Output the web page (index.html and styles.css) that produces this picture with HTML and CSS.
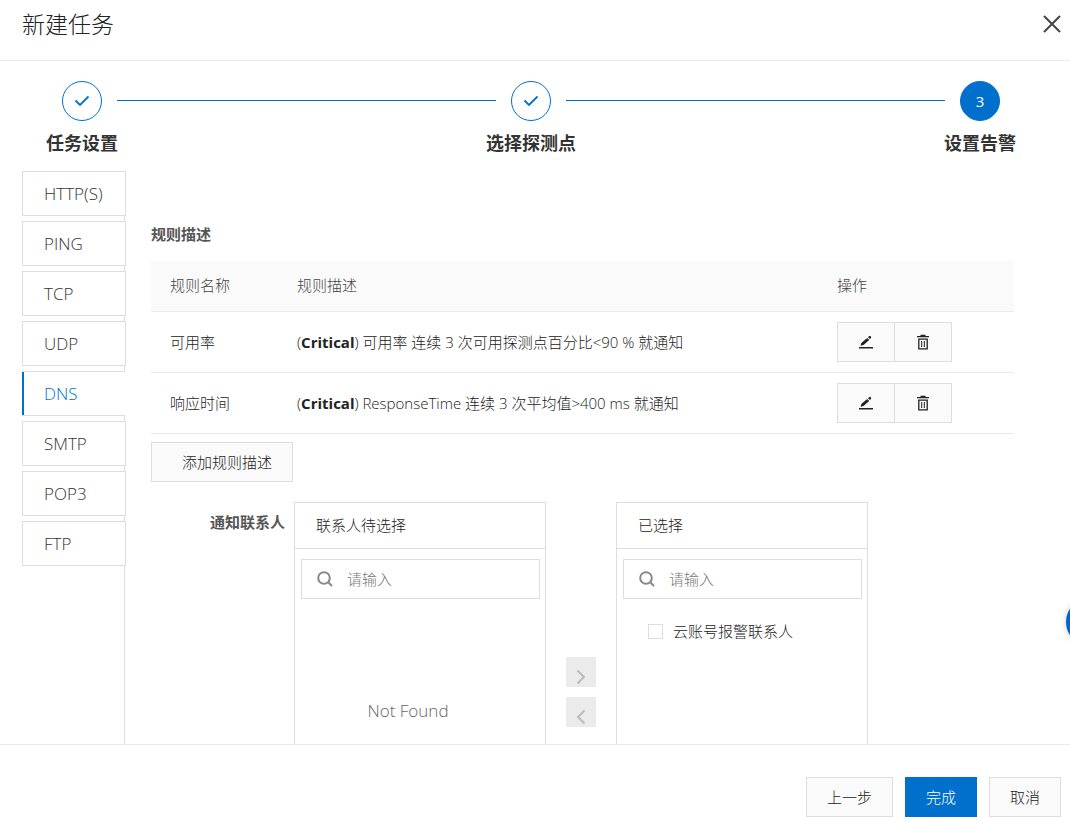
FILE: index.html
```html
<!DOCTYPE html>
<html lang="zh-CN">
<head>
<meta charset="utf-8">
<title>新建任务</title>
<meta name="viewport" content="width=device-width, initial-scale=1">
<link rel="stylesheet" href="styles.css">
</head>
<body>
<svg class="sprite" aria-hidden="true">
  <symbol id="check" viewBox="0 0 16 12"><path d="M1.5 5.5 6 10 14.500 1.500" fill="none" stroke="currentColor" stroke-width="1.800"/></symbol>
  <symbol id="search" viewBox="0 0 16 16"><circle cx="7" cy="7" r="5.800" fill="none" stroke="currentColor" stroke-width="2"/><path d="m11 11 4 4" stroke="currentColor" stroke-width="2"/></symbol>
  <symbol id="edit" viewBox="0 0 14 14"><path d="M0 12h14v1.5H0zM1.5 10.8l.8-2.9 5.9-5 2 2-5.7 5.1zM9 2.2l1.2-1.1q1-.5 1.6.2.7.8.1 1.6L10.9 4z" fill="currentColor"/></symbol>
  <symbol id="trash" viewBox="0 0 14 16"><path d="M1 2.7h12M4.5 1.5h5M2.8 5.2h8.4v9.6H2.8z" fill="none" stroke="currentColor" stroke-width="1.3"/><path d="M5.7 7v6M8.3 7v6" stroke="currentColor"/></symbol>
</svg>
<div class="dialog">
  <header class="dialog-header">
    <h1>新建任务</h1>
    <button class="close" type="button" aria-label="关闭"><svg viewBox="0 0 18 18"><path d="m1 1 16 16M17 1 1 17" fill="none" stroke="currentColor" stroke-width="2"/></svg></button>
  </header>
  <main class="dialog-body">
    <ol class="steps">
      <li class="step"><span class="step-node"><svg><use href="#check"/></svg></span><span class="step-label">任务设置</span></li>
      <li class="step-line" aria-hidden="true"></li>
      <li class="step"><span class="step-node"><svg><use href="#check"/></svg></span><span class="step-label">选择探测点</span></li>
      <li class="step-line" aria-hidden="true"></li>
      <li class="step"><span class="step-node current">3</span><span class="step-label">设置告警</span></li>
    </ol>
    <div class="columns">
      <nav class="tabs">
        <button class="tab" type="button">HTTP(S)</button>
        <button class="tab" type="button">PING</button>
        <button class="tab" type="button">TCP</button>
        <button class="tab" type="button">UDP</button>
        <button class="tab active" type="button">DNS</button>
        <button class="tab" type="button">SMTP</button>
        <button class="tab" type="button">POP3</button>
        <button class="tab" type="button">FTP</button>
      </nav>
      <section class="content">
        <h2>规则描述</h2>
        <table class="rules">
          <thead><tr><th class="col-name">规则名称</th><th>规则描述</th><th class="col-actions">操作</th></tr></thead>
          <tbody>
            <tr>
              <td>可用率</td>
              <td>(<b>Critical</b>) 可用率 连续 3 次可用探测点百分比&lt;90 % 就通知</td>
              <td><div class="actions"><button type="button" aria-label="编辑"><svg class="icon-edit"><use href="#edit"/></svg></button><button type="button" aria-label="删除"><svg class="icon-trash"><use href="#trash"/></svg></button></div></td>
            </tr>
            <tr>
              <td>响应时间</td>
              <td>(<b>Critical</b>) ResponseTime 连续 3 次平均值&gt;400 ms 就通知</td>
              <td><div class="actions"><button type="button" aria-label="编辑"><svg class="icon-edit"><use href="#edit"/></svg></button><button type="button" aria-label="删除"><svg class="icon-trash"><use href="#trash"/></svg></button></div></td>
            </tr>
          </tbody>
        </table>
        <button class="btn add-rule" type="button">添加规则描述</button>
        <div class="contacts">
          <span class="field-label">通知联系人</span>
          <div class="panel">
            <div class="panel-title">联系人待选择</div>
            <label class="search"><svg><use href="#search"/></svg><input type="text" placeholder="请输入" aria-label="搜索待选择联系人"></label>
            <p class="empty">Not Found</p>
          </div>
          <div class="movers">
            <button type="button" aria-label="添加" disabled><svg viewBox="0 0 10 16"><path d="m1.5 1.5 6.500 6.500-6.500 6.500" fill="none" stroke="currentColor" stroke-width="2"/></svg></button>
            <button type="button" aria-label="移除" disabled><svg viewBox="0 0 10 16"><path d="M8.500 1.500 2 8l6.500 6.500" fill="none" stroke="currentColor" stroke-width="2"/></svg></button>
          </div>
          <div class="panel">
            <div class="panel-title">已选择</div>
            <label class="search"><svg><use href="#search"/></svg><input type="text" placeholder="请输入" aria-label="搜索已选择联系人"></label>
            <label class="option"><input type="checkbox">云账号报警联系人</label>
          </div>
        </div>
      </section>
    </div>
  </main>
  <footer class="dialog-footer">
    <button class="btn" type="button">上一步</button>
    <button class="btn primary" type="button">完成</button>
    <button class="btn" type="button">取消</button>
  </footer>
</div>
<button class="float-help" type="button" aria-label="帮助"></button>
</body>
</html>
```
FILE: styles.css
```css
* { box-sizing: border-box; }

body {
  margin: 0;
  overflow: hidden;
  background: #fff;
  color: #222;
  font: 15px/20px "Open Sans", "Noto Sans CJK SC", sans-serif;
  font-weight: 300;
}

h1, h2, p, ol { margin: 0; padding: 0; }
ol { list-style: none; }
button, input { font: inherit; color: inherit; margin: 0; }
button { padding: 0; cursor: pointer; }
.sprite { display: none; }

.dialog { display: flex; flex-direction: column; height: 100vh; }

.dialog-header {
  flex: none;
  display: flex;
  justify-content: space-between;
  align-items: flex-start;
  height: 61px;
  padding: 8px 9px 0 22px;
  border-bottom: 1px solid #ebebeb;
}
.dialog-header h1 { font-size: 23px; line-height: 32px; font-weight: 300; }
.close { display: flex; margin-top: 7px; border: 0; background: none; color: #444; }
.close svg { width: 18px; height: 18px; }

.dialog-body { flex: 1; min-height: 0; overflow: hidden; display: flex; flex-direction: column; }

.steps { flex: none; display: flex; padding: 20px 55px 0 47px; }
.step { width: 70px; display: flex; flex-direction: column; align-items: center; }
.step-node {
  display: flex;
  align-items: center;
  justify-content: center;
  width: 40px;
  height: 40px;
  border: 1px solid #0070cc;
  border-radius: 50%;
  color: #0070cc;
}
.step-node svg { width: 16px; height: 12px; }
.step-node.current { background: #0070cc; color: #fff; font-weight: 400; }
.step-label { margin-top: 10px; font-size: 18px; line-height: 24px; font-weight: 700; color: #333; white-space: nowrap; }
.step-line { flex: 1; height: 1px; margin-top: 19px; background: #0070cc; }

.columns { flex: 1; display: flex; min-height: 0; margin-top: 16px; padding: 0 56px 0 22px; }

.tabs {
  flex: none;
  display: flex;
  flex-direction: column;
  gap: 5px;
  width: 103px;
  border-right: 1px solid #dedede;
}
.tab {
  width: 104px;
  height: 45px;
  padding: 0 0 0 21px;
  border: 1px solid #dedede;
  background: #fff;
  color: #333;
  font-size: 17px;
  text-align: left;
}
.tab.active { width: 103px; border-width: 1px 0; box-shadow: inset 2px 0 #0070cc; color: #0070cc; padding-left: 22px; }

.content { flex: 1; min-width: 0; margin-left: 26px; padding-top: 53px; }
.content h2 { font-size: 15px; line-height: 20px; font-weight: 700; color: #555; }

.rules { width: 100%; margin-top: 17px; border-collapse: separate; border-spacing: 0; table-layout: fixed; }
.rules th, .rules td { padding: 10px 19px; border-bottom: 1px solid #ebebeb; text-align: left; font-weight: 300; }
.rules th { height: 51px; padding-bottom: 12px; background: #fafafa; color: #444; }
.rules b { font-weight: 700; }
.col-name { width: 127px; }
.col-actions { width: 196px; }
.actions { display: flex; }
.actions button {
  display: flex;
  align-items: center;
  justify-content: center;
  width: 58px;
  height: 40px;
  border: 1px solid #dedede;
  background: #fafafa;
}
.actions button + button { margin-left: -1px; }
.icon-edit { width: 14px; height: 14px; }
.icon-trash { width: 14px; height: 16px; }

.btn { height: 40px; padding: 0 20px; border: 1px solid #dedede; background: #fafafa; white-space: nowrap; }
.btn.primary { border-color: #0070cc; background: #0070cc; color: #fff; }
.add-rule { display: block; margin-top: 8px; padding-left: 30px; }

.contacts { display: flex; margin-top: 20px; }
.field-label { width: 143px; padding: 10px 9px 0 0; text-align: right; font-weight: 700; color: #555; }
.panel { width: 252px; height: 330px; border: 1px solid #dedede; }
.panel-title { height: 46px; padding: 0 21px; border-bottom: 1px solid #dedede; line-height: 45px; }
.search {
  display: flex;
  align-items: center;
  gap: 14px;
  height: 40px;
  margin: 10px 5px 0 6px;
  padding: 0 15px;
  border: 1px solid #dedede;
  color: #888;
}
.search svg { flex: none; width: 16px; height: 16px; }
.search input { flex: 1; min-width: 0; padding: 0; border: 0; outline: 0; background: none; }
.search input::placeholder { color: #777; opacity: 1; }
.empty { margin-top: 100px; padding-right: 24px; text-align: center; font-size: 17px; line-height: 24px; color: #666; }
.option { display: flex; align-items: center; gap: 10px; margin: 22px 0 0 31px; }
.option input { appearance: none; width: 15px; height: 15px; border: 1px solid #dedede; background: #fff; }

.movers { display: flex; flex-direction: column; gap: 10px; margin: 155px 20px 0; }
.movers button { display: flex; justify-content: center; align-items: center; width: 30px; height: 30px; padding-top: 10px; border: 0; background: #ebebeb; color: #bbb; }
.movers svg { width: 10px; height: 16px; }

.dialog-footer {
  flex: none;
  display: flex;
  justify-content: flex-end;
  gap: 12px;
  padding: 32px 9px 5px;
  border-top: 1px solid #ebebeb;
}

.float-help {
  position: fixed;
  right: -44px;
  top: 598px;
  width: 48px;
  height: 48px;
  border: 0;
  border-radius: 50%;
  background: #0064c8;
  box-shadow: 0 0 6px #0003;
}
```
